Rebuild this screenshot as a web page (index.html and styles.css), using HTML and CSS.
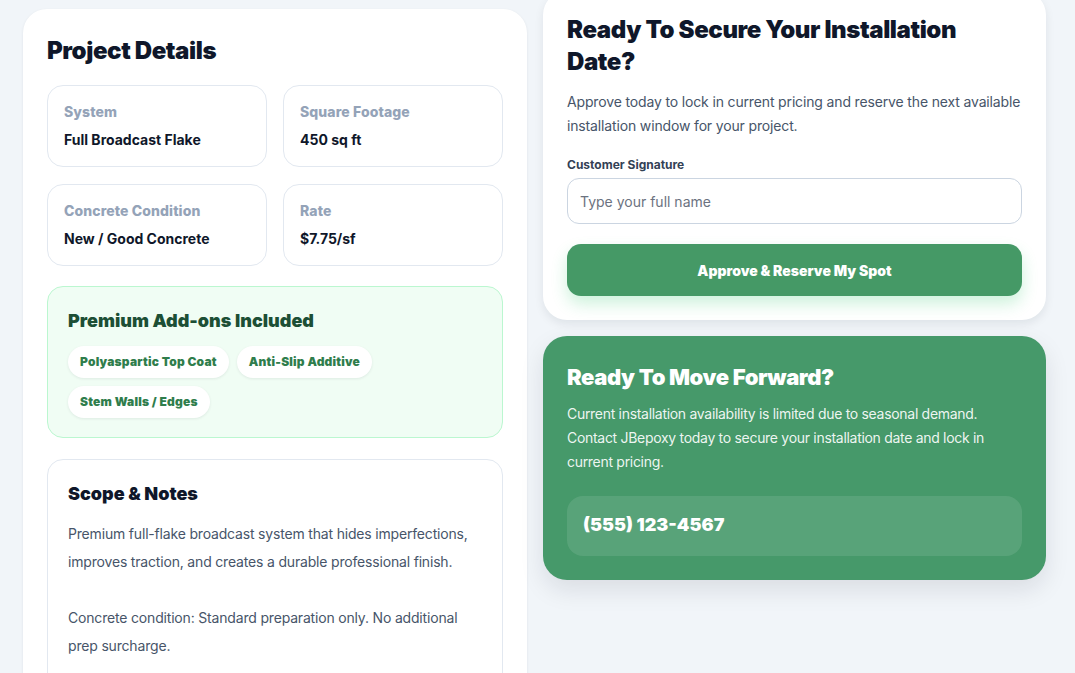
FILE: index.html
```html
<!DOCTYPE html>
<html lang="en">

<head>
    <meta charset="UTF-8">
    <meta name="viewport" content="width=device-width, initial-scale=1.0">
    <title>JBepoxy: Project Proposal</title>
    <link rel="stylesheet" href="styles.css">
</head>

<body>
    <main class="layout">
        <section class="card details">
            <h1>Project Details</h1>
            <div class="facts">
                <div class="fact">
                    <p class="fact-label">System</p>
                    <p class="fact-value">Full Broadcast Flake</p>
                </div>
                <div class="fact">
                    <p class="fact-label">Square Footage</p>
                    <p class="fact-value">450 sq ft</p>
                </div>
                <div class="fact">
                    <p class="fact-label">Concrete Condition</p>
                    <p class="fact-value">New / Good Concrete</p>
                </div>
                <div class="fact">
                    <p class="fact-label">Rate</p>
                    <p class="fact-value">$7.75/sf</p>
                </div>
            </div>

            <div class="addons">
                <h2>Premium Add-ons Included</h2>
                <ul class="chips">
                    <li>Polyaspartic Top Coat</li>
                    <li>Anti-Slip Additive</li>
                    <li>Stem Walls / Edges</li>
                </ul>
            </div>

            <div class="notes">
                <h2>Scope &amp; Notes</h2>
                <p>Premium full-flake broadcast system that hides imperfections, improves traction, and creates a durable professional finish.</p>
                <p>Concrete condition: Standard preparation only. No additional prep surcharge.</p>
            </div>
        </section>

        <aside class="side">
            <section class="card approve">
                <h2>Ready To Secure Your Installation Date?</h2>
                <p>Approve today to lock in current pricing and reserve the next available installation window for your project.</p>
                <form>
                    <label for="signature">Customer Signature</label>
                    <input type="text" id="signature" name="signature" placeholder="Type your full name">
                    <button type="button">Approve &amp; Reserve My Spot</button>
                </form>
            </section>

            <section class="cta">
                <h2>Ready To Move Forward?</h2>
                <p>Current installation availability is limited due to seasonal demand. Contact JBepoxy today to secure your installation date and lock in current pricing.</p>
                <div class="phone">(555) 123-4567</div>
            </section>
        </aside>
    </main>
</body>

</html>
```

FILE: styles.css
```css
* {
    padding: 0;
    margin: 0;
    box-sizing: border-box;
}

body {
    background-color: #f1f5f9;
    font-family: Inter, "Noto Sans", sans-serif;
    color: #0f172a;
    overflow: hidden;
}

.layout {
    display: grid;
    grid-template-columns: 504px 503px;
    gap: 16px;
    padding: 9px 0 0 23px;
    align-items: start;
}

.card {
    background-color: #fff;
    border-radius: 24px;
    padding: 24px;
}

/* left column */

.details {
    box-shadow: 0 1px 3px rgba(15, 23, 42, 0.08);
    min-height: 700px;
}

.details h1 {
    font-size: 24px;
    font-weight: 900;
    letter-spacing: -0.4px;
    line-height: 32px;
    margin-top: 2px;
    margin-bottom: 18px;
}

.facts {
    display: grid;
    grid-template-columns: 1fr 1fr;
    gap: 17px 16px;
}

.fact {
    border: 1px solid #e2e8f0;
    border-radius: 16px;
    padding: 16px;
    height: 82px;
}

.fact-label {
    font-size: 14px;
    font-weight: 800;
    color: #94a3b8;
    letter-spacing: 0.1px;
    line-height: 20px;
}

.fact-value {
    font-size: 14px;
    font-weight: 700;
    color: #0f172a;
    line-height: 20px;
    margin-top: 8px;
}

.addons {
    background-color: #f0fdf4;
    border: 1px solid #bbf7d0;
    border-radius: 16px;
    padding: 22px 20px 19px;
    margin-top: 20px;
}

.addons h2 {
    font-size: 18px;
    font-weight: 900;
    color: #1c4f35;
    line-height: 24px;
}

.chips {
    display: flex;
    flex-wrap: wrap;
    gap: 8px;
    margin-top: 13px;
}

.chips li {
    list-style: none;
    background-color: #fff;
    color: #2f7d4c;
    font-size: 12px;
    font-weight: 900;
    letter-spacing: 0.2px;
    line-height: 16px;
    padding: 8px 12px;
    border-radius: 999px;
    box-shadow: 0 1px 3px rgba(15, 23, 42, 0.08);
}

.notes {
    border: 1px solid #e2e8f0;
    border-radius: 16px;
    padding: 22px 20px;
    margin-top: 21px;
}

.notes h2 {
    font-size: 18px;
    font-weight: 900;
    line-height: 24px;
    margin-bottom: 14px;
}

.notes p {
    font-size: 14px;
    line-height: 28px;
    color: #475569;
    letter-spacing: -0.18px;
    margin-bottom: 28px;
}

/* right column */

.side {
    display: flex;
    flex-direction: column;
    gap: 16px;
    margin-top: -18px;
}

.approve {
    box-shadow: 0 4px 10px rgba(15, 23, 42, 0.08);
    padding-top: 23px;
}

.approve h2 {
    font-size: 24px;
    font-weight: 900;
    letter-spacing: -0.4px;
    line-height: 32px;
    padding-right: 60px;
}

.approve p {
    font-size: 14px;
    line-height: 24px;
    color: #475569;
    letter-spacing: -0.15px;
    margin-top: 12px;
}

.approve form {
    display: flex;
    flex-direction: column;
    margin-top: 19px;
}

.approve label {
    font-size: 12px;
    font-weight: 700;
    color: #334155;
    line-height: 16px;
}

.approve input {
    margin-top: 5px;
    height: 46px;
    border: 1px solid #cbd5e1;
    border-radius: 12px;
    padding: 0 12px;
    font-family: inherit;
    font-size: 14px;
    color: #0f172a;
    outline: none;
}

.approve input::placeholder {
    color: #6b7280;
}

.approve button {
    margin-top: 20px;
    height: 52px;
    border: none;
    border-radius: 14px;
    background-color: #459966;
    color: #fff;
    font-family: inherit;
    font-size: 14px;
    font-weight: 900;
    box-shadow: 0 8px 16px rgba(34, 197, 94, 0.22);
    cursor: pointer;
}

.cta {
    background-color: #46996a;
    color: #fff;
    border-radius: 24px;
    padding: 26px 24px 24px;
    box-shadow: 0 10px 24px rgba(15, 23, 42, 0.1);
}

.cta h2 {
    font-size: 22px;
    font-weight: 900;
    letter-spacing: -0.4px;
    line-height: 30px;
}

.cta p {
    font-size: 14px;
    line-height: 24px;
    color: rgba(255, 255, 255, 0.92);
    letter-spacing: -0.3px;
    margin-top: 10px;
}

.phone {
    margin-top: 22px;
    background-color: rgba(255, 255, 255, 0.1);
    border-radius: 16px;
    padding: 16px;
    height: 60px;
    font-size: 18px;
    font-weight: 900;
    line-height: 26px;
}
```
